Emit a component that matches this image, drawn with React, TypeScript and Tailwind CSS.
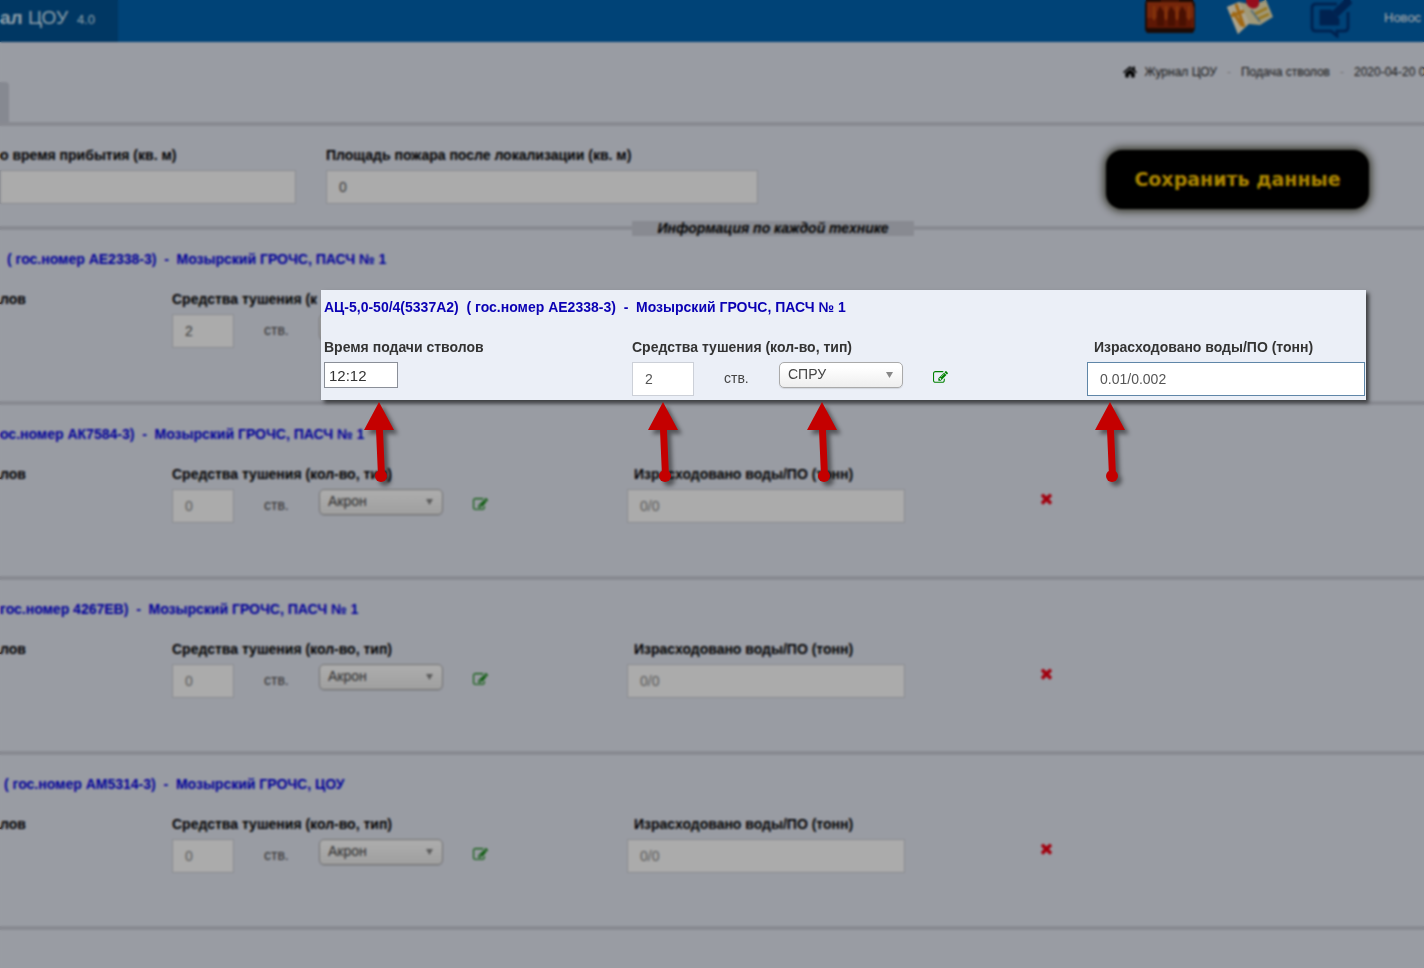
import { FaHome } from "react-icons/fa";

const EDIT_PATH =
  "M888 1184l116-116-152-152-116 116v56h96v96h56zm440-720q-16-16-33 1l-350 350q-17 17-1 33t33-1l350-350q17-17 1-33zm80 594v190q0 119-84.5 203.5t-203.5 84.5h-832q-119 0-203.5-84.5t-84.5-203.5v-832q0-119 84.5-203.5t203.5-84.5h832q63 0 117 25 15 7 18 23 3 17-9 29l-49 49q-14 14-32 8-23-6-45-6h-832q-66 0-113 47t-47 113v832q0 66 47 113t113 47h832q66 0 113-47t47-113v-126q0-13 9-22l64-64q15-15 35-7t20 29zm-96-738l288 288-672 672h-288v-288zm444 132l-92 92-288-288 92-92q28-28 68-28t68 28l152 152q28 28 28 68t-28 68z";
const TIMES_PATH =
  "M1490 1322q0 40-28 68l-136 136q-28 28-68 28t-68-28l-294-294-294 294q-28 28-68 28t-68-28l-136-136q-28-28-28-68t28-68l294-294-294-294q-28-28-28-68t28-68l136-136q28-28 68-28t68 28l294 294 294-294q28-28 68-28t68 28l136 136q28 28 28 68t-28 68l-294 294 294 294q28 28 28 68z";

const LABEL = "block whitespace-pre text-[14px] leading-5 font-bold";
const FIELD = "block h-[34px] border px-3 text-[14px] outline-none";

function EditButton() {
  return (
    <button type="button" aria-label="Изменить" className="mt-2 ml-[30px] text-[#008000]">
      <svg viewBox="0 0 1792 1792" className="size-[15px]" fill="currentColor">
        <path d={EDIT_PATH} />
      </svg>
    </button>
  );
}

function Means({
  id,
  count,
  kind,
  muted,
  label = "Средства тушения (кол-во, тип)",
}: {
  id: string;
  count: string;
  kind: string;
  muted?: boolean;
  label?: string;
}) {
  return (
    <div>
      <label htmlFor={id} className={LABEL}>
        {label}
      </label>
      <div className="mt-[5px] flex items-start">
        <input
          id={id}
          defaultValue={count}
          className={`${FIELD} w-[62px] border-[#ccd0d8] bg-white ${muted ? "text-[#888]" : "text-[#555]"}`}
        />
        <span className="ml-[30px] w-[55px] pt-[6px] text-[14px] leading-5 text-[#444]">ств.</span>
        <div className="relative">
          <select
            aria-label="Тип"
            defaultValue={kind}
            className="block h-[26px] w-[124px] appearance-none rounded-[5px] border border-[#aaa] bg-linear-to-b from-white from-20% to-[#eee] pb-[2px] pl-2 text-[14px] text-[#444] shadow-[0_1px_1px_rgba(0,0,0,0.1)] outline-none"
          >
            <option>{kind}</option>
          </select>
          <svg viewBox="0 0 7 6" className="pointer-events-none absolute top-[10px] right-[10px] h-[6px] w-[7px]" fill="#888">
            <path d="M0 0h7L3.5 6z" />
          </svg>
        </div>
        <EditButton />
      </div>
    </div>
  );
}

function Water({ id, value, active }: { id: string; value: string; active?: boolean }) {
  return (
    <div>
      <label htmlFor={id} className={`${LABEL} pl-[7px]`}>
        Израсходовано воды/ПО (тонн)
      </label>
      <input
        id={id}
        defaultValue={value}
        className={`${FIELD} mt-[5px] w-[278px] bg-white ${active ? "border-[#5f86a8] text-[#555]" : "border-[#ccd0d8] text-[#888]"}`}
      />
    </div>
  );
}

const vehicles = [
  { title: "( гос.номер АЕ2338-3)  -  Мозырский ГРОЧС, ПАСЧ № 1", indent: "pl-[7px]", count: "2", kind: "СПРУ", editing: true },
  { title: "ос.номер АК7584-3)  -  Мозырский ГРОЧС, ПАСЧ № 1", indent: "pl-0", count: "0", kind: "Акрон", editing: false },
  { title: "гос.номер 4267ЕВ)  -  Мозырский ГРОЧС, ПАСЧ № 1", indent: "pl-0", count: "0", kind: "Акрон", editing: false },
  { title: "( гос.номер АМ5314-3)  -  Мозырский ГРОЧС, ЦОУ", indent: "pl-1", count: "0", kind: "Акрон", editing: false },
];

function Header() {
  return (
    <header className="flex h-[42px] items-stretch justify-between overflow-hidden bg-[#0064b2]">
      <a href="#" className="flex w-[118px] items-center bg-[#005294] pb-[6px] text-[19px] whitespace-pre text-[#d8f0ff]">
        <b>ал</b> ЦОУ <span className="pt-1 text-[13px]"> 4.0</span>
      </a>
      <nav className="flex items-start text-[13px] whitespace-nowrap text-white">
        <a href="#" aria-label="Ящик" className="mr-8">
          <svg viewBox="0 0 50 34" className="h-[34px] w-[50px]">
            <path d="M1 0h47l2 4v25l-2 4H2l-2-3V4z" fill="#2c1008" />
            <path d="M16 0h18v4H16z" fill="#5a1a08" />
            <path d="M2 2h45l2 6v20H2z" fill="#b03a10" />
            <path d="M2 18h46v10H2z" fill="#8c2408" />
            <path d="M12 12l3-6 4 6v14h-7zM23 12l3-6 4 6v14h-7zM34 12l3-6 4 6v14h-7z" fill="#6d1904" />
            <path d="M9 6v14M21 6v14M32 6v14M44 6v14" stroke="#c8500f" strokeWidth="2" />
          </svg>
        </a>
        <a href="#" aria-label="Карта" className="mr-[37px]">
          <svg viewBox="0 0 46 34" className="h-[34px] w-[46px]">
            <path d="M0 7l12-5 14 3 13-5 7 17-13 8-11-1-11 10z" fill="#f0e4b4" />
            <path d="M0 7l12-5 10 20-11 12z" fill="#fff3d2" />
            <path d="M9 4l8 23M4 16l13-5M6 12l9 14" stroke="#ef9a1c" strokeWidth="3" fill="none" />
            <path d="M28 14l12-6M31 19l11-5" stroke="#e0b030" strokeWidth="3" />
            <path d="M24 10l9 12" stroke="#7ea3b4" strokeWidth="2" />
            <path d="M19 0h13v5q-3 5-8 3t-5-8" fill="#e0142a" />
          </svg>
        </a>
        <a href="#" aria-label="Сообщения" className="mr-8">
          <svg viewBox="0 0 42 38" className="h-[38px] w-[42px]" fill="none" stroke="#003478" strokeWidth="3">
            <path d="M27 4H6q-4 0-4 4v19q0 4 4 4h15l6 5v-5h7q4 0 4-4V12" />
            <path d="M10 10h11l8 9v6H10z" fill="#003478" strokeWidth="1" />
            <path d="M25 14L40 0" strokeWidth="8" />
          </svg>
        </a>
        <a href="#" className="w-10 pt-2 leading-5">
          Новос
        </a>
      </nav>
    </header>
  );
}

function AreaField({ id, label, value }: { id: string; label: string; value: string }) {
  return (
    <div>
      <label htmlFor={id} className={LABEL}>
        {label}
      </label>
      <input id={id} defaultValue={value} className={`${FIELD} mt-[5px] w-full border-[#ccd0d8] bg-white text-[#555]`} />
    </div>
  );
}

function Arrow({ place }: { place: string }) {
  return (
    <svg
      viewBox="0 0 40 90"
      className={`absolute top-[400px] h-[90px] w-10 drop-shadow-[4px_4px_2px_rgba(0,0,0,0.45)] ${place}`}
      fill="#c40000"
    >
      <path d="M17 2L32 30H21L23 76H16L14 30H2z" />
      <circle cx="19" cy="76" r="6" />
    </svg>
  );
}

export default function App() {
  return (
    <div className="relative min-h-screen overflow-hidden bg-[#e5e9f4] font-['Liberation_Sans',Arial,sans-serif] text-black">
      <Header />
      <div className="flex h-[80px] items-end justify-between">
        <div className="h-10 w-[9px] rounded-tr-sm bg-[#c8ccd8]" />
        <nav className="flex items-center self-start overflow-hidden pt-5 text-[12px] leading-5 whitespace-nowrap text-[#222]">
          <FaHome className="mr-2 size-[14px] text-black" />
          <a href="#">Журнал ЦОУ</a>
          <span className="w-6 text-center text-[#aaa]">-</span>
          <a href="#">Подача стволов</a>
          <span className="w-6 text-center text-[#aaa]">-</span>
          <span className="w-[70px] overflow-hidden">2020-04-20 0</span>
        </nav>
      </div>
      <div className="h-1 bg-[#cbced8]" />

      <main>
        <section className="grid h-[100px] grid-cols-[296fr_432fr_636fr] gap-x-[30px] pt-[19px]">
          <AreaField id="area-arrival" label="о время прибытия (кв. м)" value="" />
          <AreaField id="area-local" label="Площадь пожара после локализации (кв. м)" value="0" />
          <div className="flex items-start justify-end pt-[5px] pr-[55px]">
            <button
              type="button"
              className="h-[59px] w-[263px] rounded-2xl bg-black font-['DejaVu_Sans',sans-serif] text-[19px] font-bold whitespace-nowrap text-[#ffc800] shadow-[0_0_8px_2px_#444430]"
            >
              Сохранить данные
            </button>
          </div>
        </section>

        <div className="flex h-1 items-center">
          <div className="h-1 flex-[632] bg-[#cbced8]" />
          <h2 className="w-[282px] bg-[#cbced8] text-center text-[14px] leading-[15px] font-bold italic">
            Информация по каждой технике
          </h2>
          <div className="h-1 flex-[510] bg-[#cbced8]" />
        </div>

        {vehicles.map((v, i) => (
          <section key={v.title} className="h-[175px] border-b-4 border-[#cbced8] pt-[19px]">
            <h3 className={`${LABEL} text-[#0000e4] ${v.indent}`}>{v.title}</h3>
            <div className="mt-5 grid grid-cols-[172fr_455fr_414fr_383fr]">
              <span className={LABEL}>лов</span>
              <Means
                id={`count-${i}`}
                count={v.count}
                kind={v.kind}
                muted={!v.editing}
                label={v.editing ? "Средства тушения (к" : undefined}
              />
              {!v.editing && (
                <>
                  <Water id={`water-${i}`} value="0/0" />
                  <button type="button" aria-label="Удалить" className="mt-[27px] size-4 self-start text-[#f00014]">
                    <svg viewBox="300 300 1200 1300" className="h-3 w-[11px]" fill="currentColor">
                      <path d={TIMES_PATH} />
                    </svg>
                  </button>
                </>
              )}
            </div>
          </section>
        ))}
      </main>

      <div className="absolute inset-0 bg-black/33 backdrop-blur-[1px]" />

      <div
        role="dialog"
        aria-label="Подача стволов"
        className="absolute top-[290px] left-[321px] h-[110px] w-[1045px] bg-[#ebeff7] pt-[7px] pl-[3px] text-[#333] shadow-[3px_3px_4px_rgba(0,0,0,0.6)]"
      >
        <h3 className={`${LABEL} text-[#0a00b4]`}>АЦ-5,0-50/4(5337А2)  ( гос.номер АЕ2338-3)  -  Мозырский ГРОЧС, ПАСЧ № 1</h3>
        <div className="mt-5 grid grid-cols-[308px_455px_1fr]">
          <div>
            <label htmlFor="time" className={LABEL}>
              Время подачи стволов
            </label>
            <input
              id="time"
              defaultValue="12:12"
              className="mt-[5px] block h-[26px] w-[74px] border border-[#8a8f98] bg-white px-1 text-[15px] text-[#333] outline-none"
            />
          </div>
          <Means id="count-active" count="2" kind="СПРУ" />
          <Water id="water-active" value="0.01/0.002" active />
        </div>
      </div>

      <Arrow place="left-[362px]" />
      <Arrow place="left-[646px]" />
      <Arrow place="left-[805px]" />
      <Arrow place="left-[1093px]" />
    </div>
  );
}
